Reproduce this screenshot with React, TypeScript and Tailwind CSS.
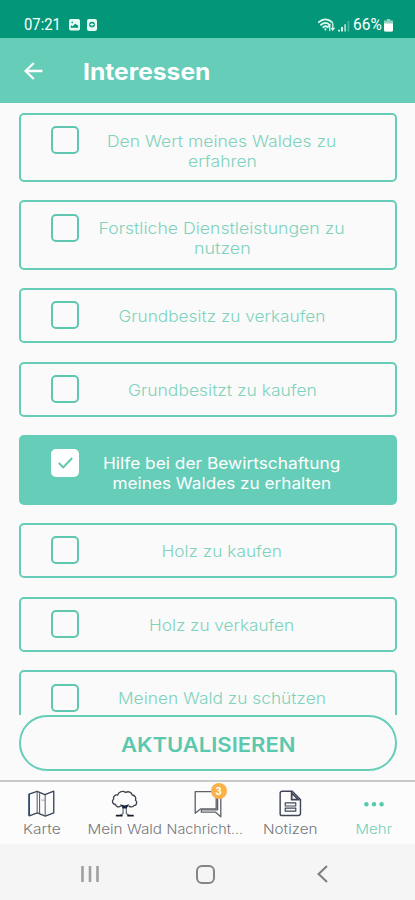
import { useLayoutEffect, useRef, useState } from "react";
import type { ReactNode } from "react";

type Line = [text: string, width: number];

const OPTIONS: { lines: Line[]; checked?: boolean }[] = [
  { lines: [["Den Wert meines Waldes zu", 229], ["erfahren", 69]] },
  { lines: [["Forstliche Dienstleistungen zu", 246], ["nutzen", 57]] },
  { lines: [["Grundbesitz zu verkaufen", 207]] },
  { lines: [["Grundbesitzt zu kaufen", 189]] },
  { lines: [["Hilfe bei der Bewirtschaftung", 237], ["meines Waldes zu erhalten", 219]], checked: true },
  { lines: [["Holz zu kaufen", 120]] },
  { lines: [["Holz zu verkaufen", 145]] },
  { lines: [["Meinen Wald zu schützen", 208]] },
];

/** Single line of text stretched horizontally to a given width. */
function FitText({ text, width, className = "" }: { text: string; width: number; className?: string }) {
  const ref = useRef<HTMLSpanElement>(null);
  const [scale, setScale] = useState(1);
  useLayoutEffect(() => {
    if (ref.current) setScale(width / ref.current.offsetWidth);
  }, [text, width]);
  return (
    <span ref={ref} className={`inline-block whitespace-nowrap ${className}`} style={{ transform: `scaleX(${scale})` }}>
      {text}
    </span>
  );
}

function StatusBar() {
  return (
    <div className="flex h-[38px] shrink-0 items-end bg-[#039678] pr-[22px] pb-[4px] pl-[24px] text-white">
      <FitText text="07:21" width={37} className="origin-left font-['Roboto',sans-serif] text-[16px] leading-[18px]" />
      <svg className="mb-[3px] ml-[5px] h-3 w-[11px]" viewBox="0 0 11 12">
        <rect width="11" height="11.5" rx="1.8" fill="#e9fbf5" />
        <path d="M1.8 8.8V6.2l1.8 1 2.6-2.4 3 2v2z" fill="#039678" />
        <circle cx="3.2" cy="3.4" r=".8" fill="#039678" />
      </svg>
      <svg className="mb-[3px] ml-[7px] h-3 w-[10px]" viewBox="0 0 10 12">
        <rect width="10" height="12" rx="2" fill="#e9fbf5" />
        <circle cx="5" cy="5.6" r="2.9" fill="#039678" />
        <path d="M3 5.6h4M5 4v3.4" stroke="#e9fbf5" strokeWidth="1" />
      </svg>
      <svg className="mb-[2px] ml-auto h-[14px] w-[17px]" viewBox="0 0 17 14" fill="none" stroke="#dff7ef" strokeLinecap="round">
        <path d="M.8 4.2C4.8.6 10 .6 14 4.2M3 6.8c2.8-2.4 6-2.4 8.6 0M5.2 9.2c1.2-1.1 3.2-1.1 4.6 0" strokeWidth="1.8" />
        <path d="M7.4 11.2v.4" strokeWidth="2" />
        <path d="M11.8 12.6V6.8l-1.4 1.4M14.8 5.4v6.4l1.4-1.6M14.8 11.8l-1.2-1.4" strokeWidth="1.3" />
      </svg>
      <svg className="mb-[2px] ml-[2px] h-[12px] w-[14px]" viewBox="0 0 14 12">
        <path d="M1 11.5V9.8h2v1.7zM4 11.5V7h2v4.5z" fill="#d7f3ea" />
        <path d="M7.3 11.5V4.3h1.6v7.2z" fill="#b5e6d8" />
        <path d="M10.6 11.5V1h1.6v10.5z" fill="#4cb69d" />
      </svg>
      <FitText text="66%" width={29} className="ml-[2px] origin-left font-['Roboto',sans-serif] text-[16px] leading-[18px]" />
      <svg className="mb-[2px] ml-[1px] h-[13px] w-[9px]" viewBox="0 0 9 13">
        <path d="M2.8 0h3.4v1.5H9V11a1.5 1.5 0 0 1-1.5 1.5h-6A1.5 1.5 0 0 1 0 11V1.5h2.8z" fill="#8ed3c2" />
        <path d="M0 4.5h9V11a1.5 1.5 0 0 1-1.5 1.5h-6A1.5 1.5 0 0 1 0 11z" fill="#fff" />
      </svg>
    </div>
  );
}

function Header() {
  return (
    <header className="flex h-[65px] shrink-0 items-center bg-[#66cdb8] pl-[24px] text-white">
      <svg className="h-[18px] w-[19px]" viewBox="0 0 19 18" fill="none" stroke="#fff" strokeWidth="2.3">
        <path d="M18.4 9H1.8M9.8 1L1.6 9l8.2 8" />
      </svg>
      <h1 className="mt-[3px] ml-[40px] text-[22.5px] leading-[30px] font-bold">
        <FitText text="Interessen" width={127} className="origin-left" />
      </h1>
    </header>
  );
}

function Option({ lines, checked }: { lines: Line[]; checked?: boolean }) {
  const double = lines.length > 1;
  return (
    <div
      className={`flex w-full shrink-0 items-start rounded-[5px] border-2 border-[#66cdb8] ${double ? "h-[69.4px]" : "h-[55.6px]"} ${checked ? "bg-[#66cdb8] text-white" : "text-[#7fd3bd]"}`}
    >
      <div
        className={`mt-[11.5px] ml-[30px] flex size-[28px] shrink-0 items-center justify-center rounded-[5px] border-2 ${checked ? "border-white bg-white" : "border-[#5ec7b0]"}`}
      >
        {checked && (
          <svg className="h-[12px] w-[15px] shrink-0" viewBox="0 0 15 12" fill="none" stroke="#5cc7af" strokeWidth="1.9">
            <path d="M.8 6l4.4 4.5L14.2 1" />
          </svg>
        )}
      </div>
      <div className={`mt-[16px] mr-[30px] flex flex-1 flex-col items-center text-[16px] leading-[20px] ${checked ? "font-normal" : "font-light"}`}>
        {lines.map(([text, width]) => (
          <FitText key={text} text={text} width={width} />
        ))}
      </div>
    </div>
  );
}

function MapIcon() {
  return (
    <svg className="h-[27px] w-[27px]" viewBox="0 0 28 28" fill="none" stroke="#39455a" strokeWidth="1.4" strokeLinejoin="round">
      <path d="M1.2 4.2L9.5 1.4l8 3.4 9.2-3.6v22.6l-8.8 3.2-8.2-3.4-8.5 3.2z" />
      <path d="M9.5 1.4v22.2M12 3.4v20.8M17.8 5v21.6" stroke="#59616c" strokeWidth="1.1" />
      <path d="M1.2 4.2v22.6" stroke="#234b78" strokeWidth="1.6" />
      <path d="M17.8 10.5h-4" stroke="#858b93" strokeWidth=".8" />
    </svg>
  );
}

function TreeIcon() {
  return (
    <svg className="h-[27px] w-[28px]" viewBox="0 0 28 28" fill="none" stroke="#3b434e" strokeWidth="1.4" strokeLinejoin="round" strokeLinecap="round">
      <path d="M9.5 16.6C7.5 18.4 4.5 17.4 4.2 15 1.2 15.2-.2 11.4 2.2 9.4 1.4 6.4 4 4.6 6.4 5.2 7.5 1.6 12 .2 14.6 2.6c3-1.8 6.4-.2 6.8 2.6 3 .2 4.6 3 3.4 5.2 2.4 2 1.4 5.6-1.6 5.8-1 1.6-3.4 1.8-5 .5" />
      <path d="M12 18.5v5.8l-2.6 2M15.4 18.5v5.8l2.6 2" stroke="#68727a" strokeWidth="1.3" />
      <path d="M9 14.8l4.6 1.4 4.8-1.4-2.8 4.4h-3.8z" fill="#18243c" stroke="none" />
      <path d="M5.4 26.6h5.2M17.2 26.6h5" stroke="#151c29" strokeWidth="2" />
    </svg>
  );
}

function ChatIcon() {
  return (
    <svg className="h-[28px] w-[28px]" viewBox="0 0 28 28" fill="none" stroke="#5c6067" strokeWidth="1.3" strokeLinejoin="round">
      <path d="M1.2 1.6h21v17.2H6.8l-5.6 4.4z" />
      <path d="M24 4.8h2.8v22l-5.2-4.6H7.4v-2.4h16.2V4.8" />
    </svg>
  );
}

function NoteIcon() {
  return (
    <svg className="h-[27px] w-[23px]" viewBox="0 0 24 28" fill="none" stroke="#3f4657" strokeWidth="1.5" strokeLinejoin="round">
      <path d="M3.2 1.2h10.6l8.6 8.6v14.4a2.4 2.4 0 0 1-2.4 2.4H3.2a2 2 0 0 1-2-2V3.2a2 2 0 0 1 2-2z" />
      <path d="M13.2 2v8h8.4M13.6 3.4l6.2 6" strokeWidth="1.8" />
      <path d="M6.5 13.4h11v3.2h-11zM6.5 18.8h11V22h-11z" strokeWidth="1.2" />
    </svg>
  );
}

function DotsIcon() {
  return (
    <svg className="h-[28px] w-[20px]" viewBox="0 0 20 28" fill="#53c9ae">
      <circle cx="2.4" cy="14.2" r="2.2" />
      <circle cx="10" cy="14.2" r="2.2" />
      <circle cx="17.6" cy="14.2" r="2.2" />
    </svg>
  );
}

function Tab({ label, width, active, badge, children }: { label: string; width: number; active?: boolean; badge?: string; children: ReactNode }) {
  return (
    <div className={`flex w-[83px] flex-col items-center pt-[8px] ${active ? "text-[#72d0b9]" : "text-[#74777b]"}`}>
      <div className="relative flex h-[28px] justify-center">
        {children}
        {badge && (
          <span className="absolute -top-[7px] left-[17px] flex size-[16px] items-center justify-center rounded-full bg-[#fab14a] text-[10px] leading-none font-bold text-white">
            {badge}
          </span>
        )}
      </div>
      <FitText text={label} width={width} className={`mt-[3px] text-[13px] leading-[16px] font-light ${badge ? "mr-[5px]" : ""}`} />
    </div>
  );
}

export default function App() {
  return (
    <div className="flex h-[900px] w-[415px] flex-col overflow-hidden bg-[#fafafa] font-['Inter',sans-serif]">
      <StatusBar />
      <Header />
      <main className="flex h-[612px] shrink-0 flex-col gap-[18.2px] overflow-hidden pt-[9.6px] pr-[18px] pl-[19px]">
        {OPTIONS.map((option) => (
          <Option key={option.lines[0][0]} {...option} />
        ))}
      </main>
      <div className="h-[65px] shrink-0 pr-[18px] pl-[19px]">
        <button className="flex h-[56px] w-full items-center justify-center rounded-full border-2 border-[#66cdb8] pt-[3px] text-[20px] font-semibold text-[#5bc8ae]">
          <FitText text="AKTUALISIEREN" width={175} />
        </button>
      </div>
      <nav className="flex h-[64px] shrink-0 border-t-2 border-[#c7c9ca] bg-[#fcfcfc]">
        <Tab label="Karte" width={38}>
          <MapIcon />
        </Tab>
        <Tab label="Mein Wald" width={74}>
          <TreeIcon />
        </Tab>
        <Tab label="Nachricht..." width={77} badge="3">
          <ChatIcon />
        </Tab>
        <Tab label="Notizen" width={55}>
          <NoteIcon />
        </Tab>
        <Tab label="Mehr" width={37} active>
          <DotsIcon />
        </Tab>
      </nav>
      <div className="flex h-[56px] shrink-0 items-center bg-[#f5f5f5] pt-[4px] pl-[81px]">
        <svg className="h-[18px] w-[18px]" viewBox="0 0 18 18" stroke="#a0a0a0" strokeWidth="2.6">
          <path d="M1.5 1v16M9 1v16M16.5 1v16" />
        </svg>
        <span className="ml-[97px] size-[19px] rounded-[6px] border-2 border-[#858585]" />
        <svg className="ml-[102px] h-[18px] w-[11px]" viewBox="0 0 11 18" fill="none" stroke="#7d7d7d" strokeWidth="2">
          <path d="M10 1L1.6 9l8.4 8" />
        </svg>
      </div>
    </div>
  );
}
